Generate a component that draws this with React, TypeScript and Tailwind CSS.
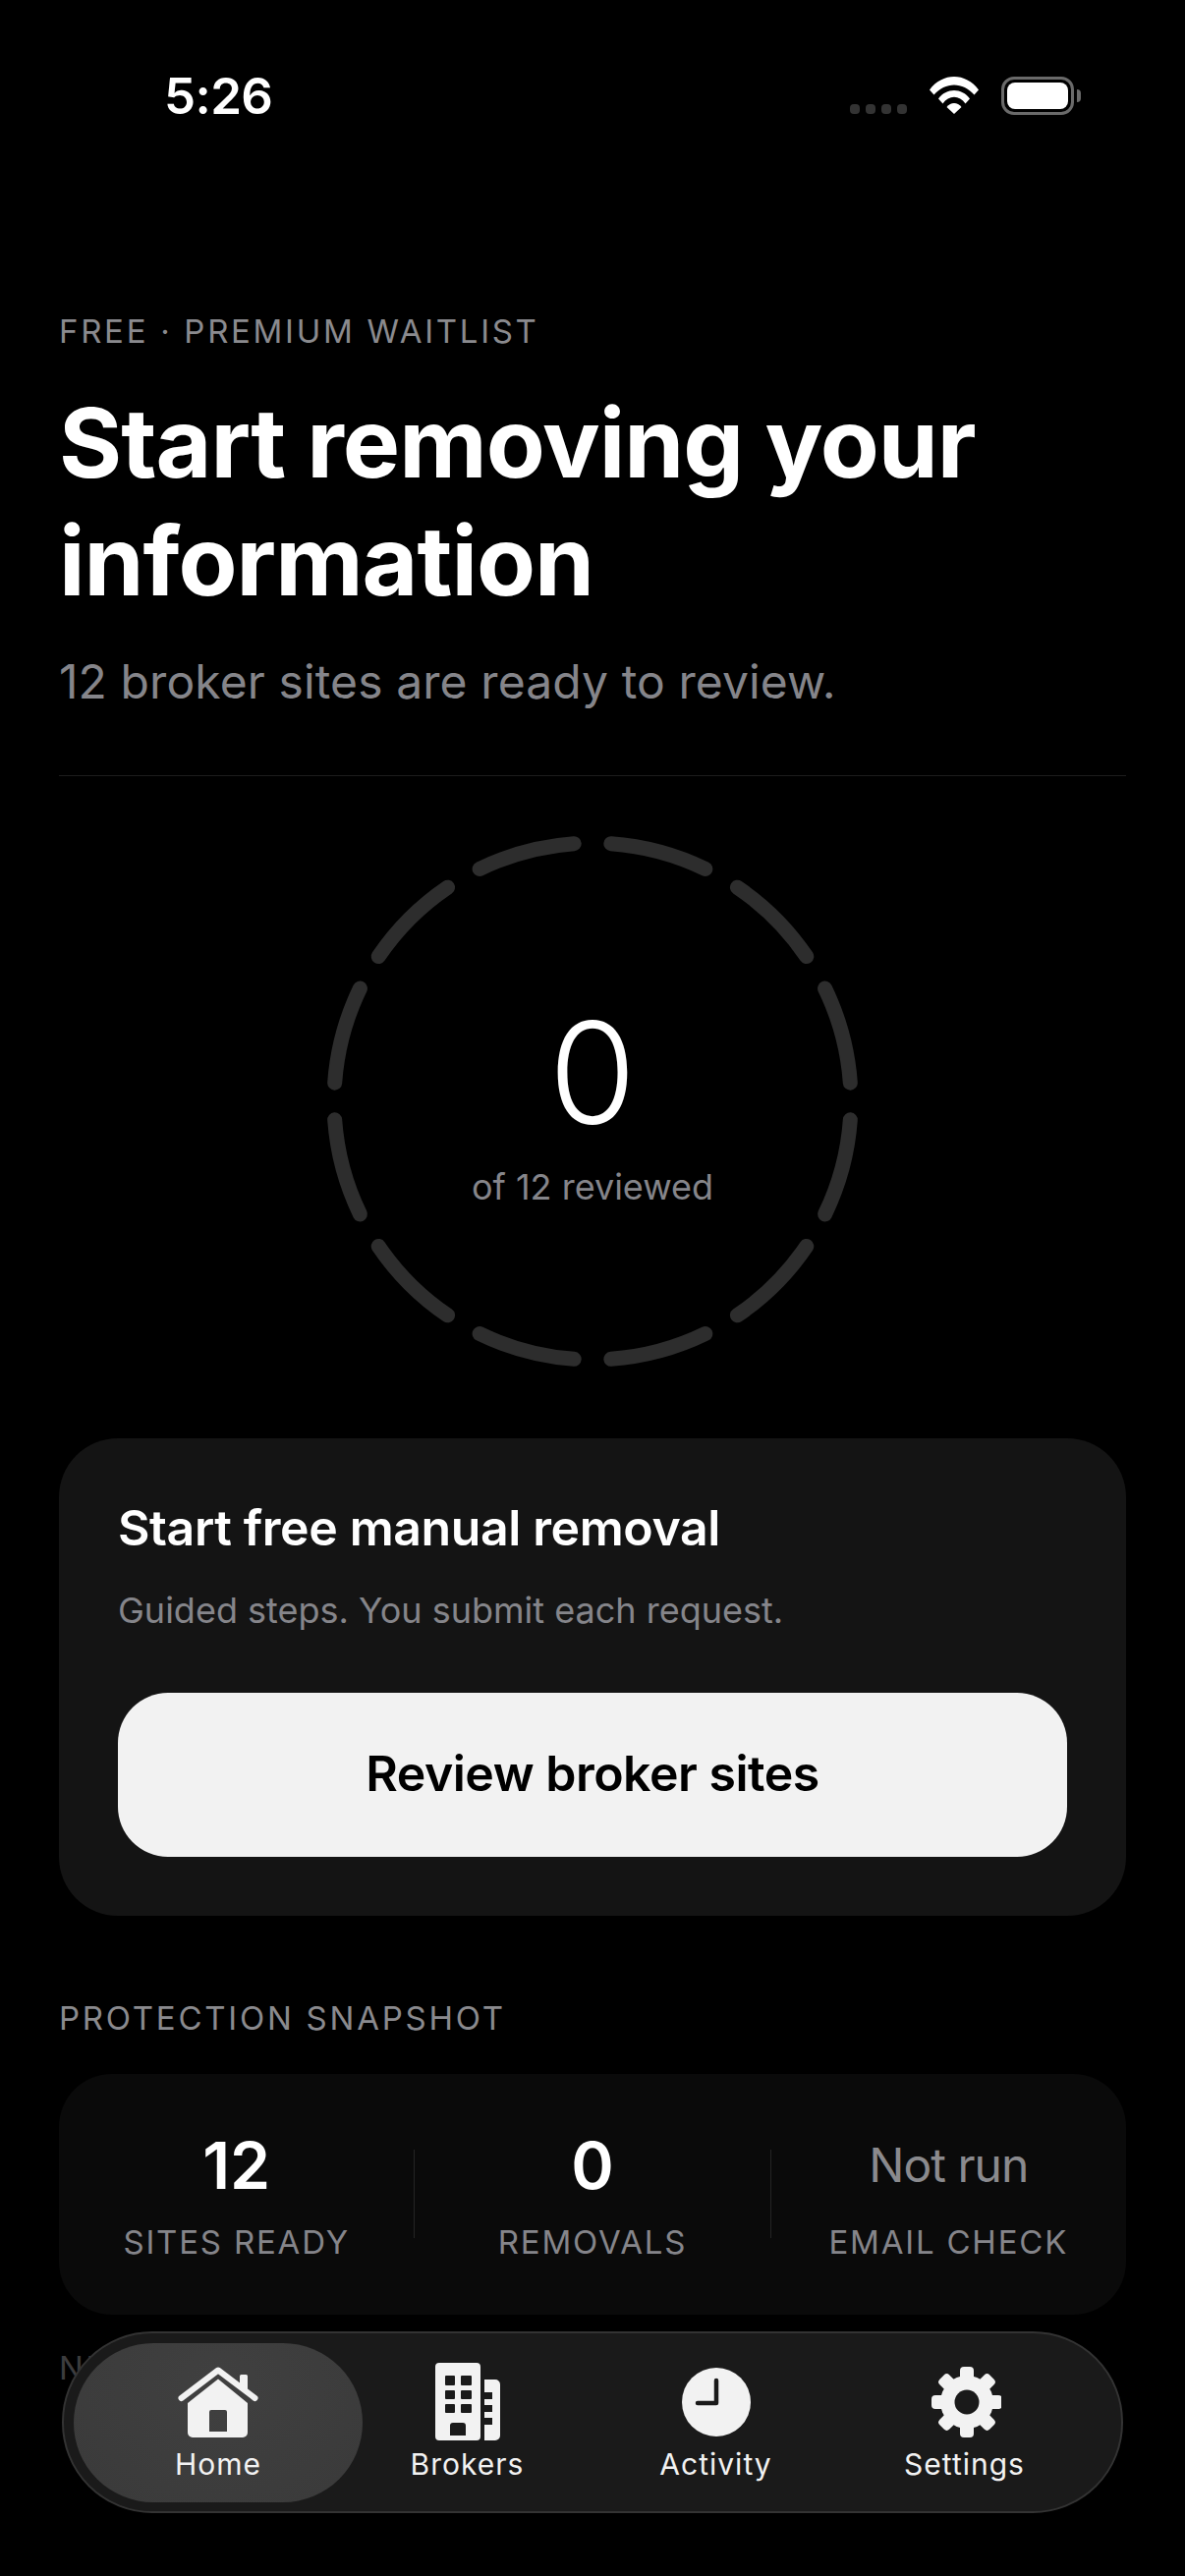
import React from "react";

const F = { fontFamily: "Inter, 'Liberation Sans', sans-serif" };

function arc(cx: number, cy: number, r: number, a0: number, a1: number) {
  const p = (a: number) => {
    const t = ((a - 90) * Math.PI) / 180;
    return `${(cx + r * Math.cos(t)).toFixed(2)} ${(cy + r * Math.sin(t)).toFixed(2)}`;
  };
  return `M${p(a0)}A${r} ${r} 0 0 1 ${p(a1)}`;
}

function Ring() {
  return (
    <svg width="542" height="542" viewBox="0 0 542 542" className="block">
      {Array.from({ length: 12 }).map((_, i) => (
        <path
          key={i}
          d={arc(271, 271, 263, i * 30 + 4.1, i * 30 + 25.9)}
          fill="none"
          stroke="#2d2d2d"
          strokeWidth="15"
          strokeLinecap="round"
        />
      ))}
    </svg>
  );
}

function HomeIcon() {
  return (
    <svg width="90" height="80" viewBox="176 2405 90 80" fill="#f2f2f2">
      <path d="M243 2418.500a1.500 1.500 0 0 1 1.500-1.500h5a1.500 1.500 0 0 1 1.500 1.500V2438l-8-6z" />
      <path d="M183.500 2441L221 2412.500L258.500 2441" fill="none" stroke="#f2f2f2" strokeWidth="6" strokeLinecap="round" strokeLinejoin="round" />
      <path fillRule="evenodd" d="M221 2421.500l30 24.500v30a5 5 0 0 1-5 5h-51a5 5 0 0 1-5-5v-30zM214 2453a2 2 0 0 0-2 2v20h18v-20a2 2 0 0 0-2-2z" />
    </svg>
  );
}

function BrokersIcon() {
  return (
    <svg width="70" height="80" viewBox="441 2405 70 80" fill="#f2f2f2">
      <path
        fillRule="evenodd"
        d="M447 2405h38a4 4 0 0 1 4 4v71a4 4 0 0 1-4 4h-38a4 4 0 0 1-4-4v-71a4 4 0 0 1 4-4zM454 2418a1 1 0 0 0-1 1v8a1 1 0 0 0 1 1h8a1 1 0 0 0 1-1v-8a1 1 0 0 0-1-1zM470 2418a1 1 0 0 0-1 1v8a1 1 0 0 0 1 1h9a1 1 0 0 0 1-1v-8a1 1 0 0 0-1-1zM454 2433a1 1 0 0 0-1 1v7a1 1 0 0 0 1 1h8a1 1 0 0 0 1-1v-7a1 1 0 0 0-1-1zM470 2433a1 1 0 0 0-1 1v7a1 1 0 0 0 1 1h9a1 1 0 0 0 1-1v-7a1 1 0 0 0-1-1zM454 2447a1 1 0 0 0-1 1v7a1 1 0 0 0 1 1h8a1 1 0 0 0 1-1v-7a1 1 0 0 0-1-1zM470 2447a1 1 0 0 0-1 1v7a1 1 0 0 0 1 1h9a1 1 0 0 0 1-1v-7a1 1 0 0 0-1-1zM461 2466a3 3 0 0 0-3 3v10h16v-10a3 3 0 0 0-3-3z"
      />
      <path d="M493 2422h11a5 5 0 0 1 5 5v52a5 5 0 0 1-5 5h-11v-16h8v-7h-8v-6h8v-7h-8v-6h8v-7h-8z" />
    </svg>
  );
}

function ClockIcon() {
  return (
    <svg width="70" height="80" viewBox="694 2405 70 80">
      <circle cx="729" cy="2445" r="35" fill="#f2f2f2" />
      <path d="M729 2423v23h-19" fill="none" stroke="#1a1a1a" strokeWidth="4.500" strokeLinecap="round" strokeLinejoin="round" />
    </svg>
  );
}

function GearIcon() {
  return (
    <svg width="74" height="80" viewBox="945 2405 74 80" fill="#f2f2f2">
      {Array.from({ length: 8 }).map((_, i) => (
        <rect key={i} x="977" y="2409" width="14" height="22" rx="4" transform={`rotate(${i * 45} 984 2445)`} />
      ))}
      <circle cx="984" cy="2445" r="27" />
      <circle cx="984" cy="2445" r="12.500" fill="#1a1a1a" />
    </svg>
  );
}

function WifiIcon() {
  return (
    <svg width="50" height="38" viewBox="0 0 50 38" fill="#fff">
      <path d="M0 13.500C13-4.500 37-4.500 50 13.500l-4.500 5C34 5 16 5 4.500 18.500z" />
      <path d="M9 22.500C17 11 33 11 41 22.500l-4.500 5C30.500 18.500 19.500 18.500 13.500 27.500z" />
      <path d="M17.500 31C21.500 25.500 28.500 25.500 32.500 31L25 38z" />
    </svg>
  );
}

function BatteryIcon() {
  return (
    <div className="flex items-center gap-[3px]">
      <div className="w-[74px] h-[39px] rounded-[13px] border-[3px] border-[#6a6a6a] p-[3px]">
        <div className="w-full h-full rounded-[8px] bg-white" />
      </div>
      <div className="w-[4px] h-[13px] rounded-r-full bg-[#6a6a6a]" />
    </div>
  );
}

function Stat({ value, label, muted }: { value: string; label: string; muted?: boolean }) {
  return (
    <div className="flex-1 flex flex-col items-center">
      <div
        className={
          muted
            ? "h-[66px] flex items-center text-[48px] leading-none tracking-[-1px] text-[#8a8a8e] font-normal"
            : "h-[66px] flex items-center text-[66px] leading-none text-white font-semibold"
        }
      >
        {value}
      </div>
      <div className="mt-[27px] text-[33px] leading-[36px] tracking-[1.800px] text-[#85858a] whitespace-nowrap">{label}</div>
    </div>
  );
}

function Tab({ icon, label }: { icon: React.ReactNode; label: string }) {
  return (
    <div className="flex flex-col items-center">
      {icon}
      <div className="mt-[5px] text-[30px] leading-[36px] font-normal tracking-[1px] text-[#f2f2f2]">{label}</div>
    </div>
  );
}

export default function App() {
  return (
    <div style={F} className="relative w-[1206px] h-[2622px] overflow-hidden bg-black text-white">
      <div className="flex items-center h-[38px] mt-[78px] pl-[167px] pr-[106px]">
        <div className="text-[51px] leading-[38px] pt-[2px] font-semibold tracking-[-0.6px]">5:26</div>
        <div className="ml-auto flex items-center">
          <div className="flex gap-[6px] items-end h-[38px] mr-[23px]">
            {[0, 1, 2, 3].map((i) => (
              <div key={i} className="w-[10px] h-[10px] rounded-[4px] bg-[#333333]" />
            ))}
          </div>
          <div className="mr-[23px] h-[38px]"><WifiIcon /></div>
          <BatteryIcon />
        </div>
      </div>

      <div className="px-[60px]">
        <div className="mt-[201px] text-[33px] leading-[40px] tracking-[2.700px] text-[#8a8a8e]">FREE · PREMIUM WAITLIST</div>
        <h1 className="mt-[34px] text-[98px] leading-[120px] font-bold tracking-[-1px]">
          Start removing your
          <br />
          information
        </h1>
        <div className="mt-[32px] text-[48px] leading-[62px] tracking-[0.1px] text-[#85858a]">12 broker sites are ready to review.</div>
        <div className="mt-[64px] h-[1px] bg-[#1c1c1c]" />

        <div className="mt-[60px] h-[542px] relative flex justify-center">
          <Ring />
          <div className="absolute inset-0 flex flex-col items-center pt-[170px]">
            <div className="text-[144px] leading-[144px] font-light">0</div>
            <div className="mt-[22px] text-[36px] leading-[44px] text-[#85858a]">of 12 reviewed</div>
          </div>
        </div>

        <div className="mt-[72px] rounded-[60px] bg-[#141414] p-[60px]">
          <div className="mt-[1px] text-[50px] leading-[60px] font-semibold tracking-[-0.4px]">Start free manual removal</div>
          <div className="mt-[32px] text-[36px] leading-[44px] text-[#85858a]">Guided steps. You submit each request.</div>
          <div className="mt-[62px] h-[167px] pb-[2px] rounded-[51px] bg-[#f2f2f2] flex items-center justify-center text-[50px] font-semibold tracking-[-0.5px] text-black">
            Review broker sites
          </div>
        </div>

        <div className="mt-[84px] text-[33px] leading-[40px] tracking-[2.750px] text-[#8a8a8e]">PROTECTION SNAPSHOT</div>

        <div className="mt-[37px] h-[245px] rounded-[54px] bg-[#0a0a0a] flex items-start pt-[60px]">
          <Stat value="12" label="SITES READY" />
          <div className="w-[1px] h-[90px] mt-[17px] bg-[#242424]" />
          <Stat value="0" label="REMOVALS" />
          <div className="w-[1px] h-[90px] mt-[17px] bg-[#242424]" />
          <Stat value="Not run" label="EMAIL CHECK" muted />
        </div>

        <div className="mt-[34px] text-[33px] leading-[40px] tracking-[2.750px] text-[#3c3c3e]">NEXT STEPS</div>
      </div>

      <div className="absolute left-[63px] top-[2373px] w-[1080px] h-[185px] rounded-[92px] bg-[#1a1a1a] border-[2px] border-[#333333] flex items-center p-[10px]">
        <div className="w-[294px] h-[162px] rounded-[81px] bg-[radial-gradient(ellipse_at_50%_25%,#404040,#3a3a3a)] flex items-center justify-center shrink-0">
          <Tab icon={<HomeIcon />} label="Home" />
        </div>
        <div className="grid grid-cols-3 w-[759px] -ml-[20px] shrink-0">
          <Tab icon={<BrokersIcon />} label="Brokers" />
          <Tab icon={<ClockIcon />} label="Activity" />
          <Tab icon={<GearIcon />} label="Settings" />
        </div>
      </div>
    </div>
  );
}
